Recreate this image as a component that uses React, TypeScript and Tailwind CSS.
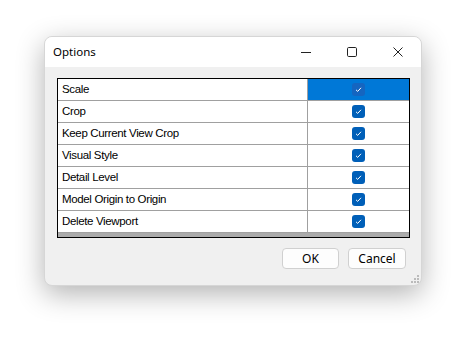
import React from "react";

const rows = [
  "Scale",
  "Crop",
  "Keep Current View Crop",
  "Visual Style",
  "Detail Level",
  "Model Origin to Origin",
  "Delete Viewport",
];

function Check({ selected }: { selected?: boolean }) {
  return (
    <div
      className={
        "w-[13px] h-[13px] rounded-[3px] flex items-center justify-center " +
        (selected ? "bg-[#1565c0]" : "bg-[#005fb8]")
      }
    >
      <svg width="9" height="9" viewBox="0 0 9 9">
        <path d="M2 4.8 L3.7 6.4 L7 2.8" fill="none" stroke="white" strokeWidth="1" />
      </svg>
    </div>
  );
}

export default function App() {
  return (
    <div className="w-[467px] h-[349px] bg-white pt-[36px] pl-[44px]">
      <div className="w-[378px] h-[250px] rounded-[8px] border border-[#d6d6d6] bg-[#f0f0f0] shadow-[0_8px_28px_rgba(0,0,0,0.3)] flex flex-col overflow-hidden relative">
        <div className="h-[30px] bg-white flex items-center pl-[8px] shrink-0">
          <span className="text-[11.5px] text-black font-['Noto_Sans',sans-serif] flex-1">Options</span>
          <div className="w-[46px] h-[30px] flex items-center justify-center">
            <svg width="10" height="10" viewBox="0 0 10 10">
              <path d="M0 5.5 H10" stroke="#222" strokeWidth="1" />
            </svg>
          </div>
          <div className="w-[46px] h-[30px] flex items-center justify-center">
            <svg width="10" height="10" viewBox="0 0 10 10">
              <rect x="0.5" y="0.5" width="9" height="9" rx="1.2" fill="none" stroke="#222" strokeWidth="1" />
            </svg>
          </div>
          <div className="w-[46px] h-[30px] flex items-center justify-center">
            <svg width="10" height="10" viewBox="0 0 10 10">
              <path d="M0.5 0.5 L9.5 9.5 M9.5 0.5 L0.5 9.5" stroke="#222" strokeWidth="1" />
            </svg>
          </div>
        </div>
        <div className="flex-1 pt-[11px] pl-[12px] flex flex-col">
          <div className="w-[353px] h-[160px] border border-black bg-[#ababab] flex flex-col">
            {rows.map((r, i) => (
              <div key={r} className="h-[22px] flex border-b border-[#a0a0a0] shrink-0">
                <div className="w-[250px] bg-white border-r border-[#a0a0a0] flex items-center pl-[4px] text-[11.5px] tracking-[-0.35px] text-black font-['Liberation_Sans',sans-serif]">
                  {r}
                </div>
                <div
                  className={
                    "flex-1 flex items-center justify-center " +
                    (i === 0 ? "bg-[#0078d7]" : "bg-white")
                  }
                >
                  <Check selected={i === 0} />
                </div>
              </div>
            ))}
          </div>
          <div className="flex justify-end gap-[9px] mt-[10px] w-[353px]">
            <button className="w-[57px] h-[21px] rounded-[4px] border border-[#d0d0d0] bg-[#fdfdfd] text-[12px] text-black font-['Noto_Sans',sans-serif] leading-none">
              OK
            </button>
            <button className="w-[58px] h-[21px] rounded-[4px] border border-[#d0d0d0] bg-[#fdfdfd] text-[12px] text-black font-['Noto_Sans',sans-serif] leading-none mr-[4px]">
              Cancel
            </button>
          </div>
        </div>
        <div className="absolute right-[2px] bottom-[2px]">
          <svg width="8" height="8" viewBox="0 0 8 8">
            <rect x="6" y="0" width="2" height="2" fill="#bbb" />
            <rect x="3" y="3" width="2" height="2" fill="#bbb" />
            <rect x="6" y="3" width="2" height="2" fill="#bbb" />
            <rect x="0" y="6" width="2" height="2" fill="#bbb" />
            <rect x="3" y="6" width="2" height="2" fill="#bbb" />
            <rect x="6" y="6" width="2" height="2" fill="#bbb" />
          </svg>
        </div>
      </div>
    </div>
  );
}
